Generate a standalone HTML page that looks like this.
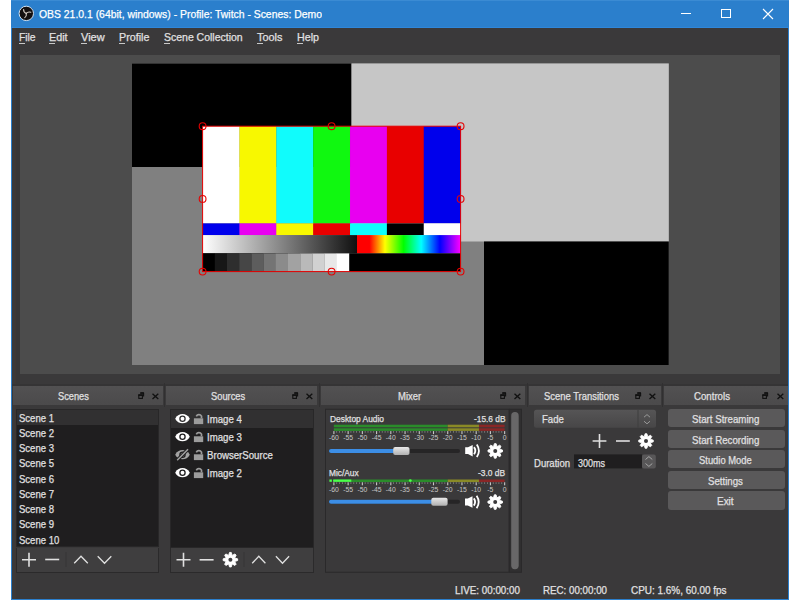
<!DOCTYPE html>
<html><head><meta charset="utf-8"><style>
*{box-sizing:border-box;margin:0;padding:0}
html,body{width:800px;height:600px;overflow:hidden;background:#fff;font-family:"Liberation Sans",sans-serif;color:#e1e0e1;position:relative}
div,svg{position:absolute}
.t{white-space:pre;line-height:1;transform-origin:0 0;-webkit-text-stroke:0.25px currentColor}
</style></head><body>
<div style="left:11px;top:0;width:778px;height:600px;background:#3a393a;border:1px solid #2b7fcc;border-top:none"></div>
<div style="left:11px;top:0;width:778px;height:28px;background:#2b7fcc;border-top:1px solid #3b8bd3;border-bottom:1px solid #2f87da"></div>
<div style="left:15px;top:28px;width:1px;height:571px;background:#3e3734"></div>
<div style="left:16px;top:28px;width:3.5px;height:571px;background:#373637"></div>
<svg style="left:18px;top:5px" width="17" height="17" viewBox="0 0 17 17"><circle cx="8.3" cy="8.4" r="7.2" fill="#141010" stroke="#cfe0f0" stroke-width="1"/><g fill="none" stroke="#d8d0c8" stroke-width="1.1" stroke-linecap="round"><path d="M8.3 8.4Q5.5 7.6 5.6 4.6"/><path d="M8.3 8.4Q10.2 6.3 12.8 7.3"/><path d="M8.3 8.4Q8.8 11.3 6.8 12.6"/></g></svg>
<div class="t" style="left:38.60px;top:9.37px;font-size:11.5px;color:#ffffff;transform:scaleX(0.904)">OBS 21.0.1 (64bit, windows) - Profile: Twitch - Scenes: Demo</div>
<div style="left:681px;top:13px;width:10px;height:1px;background:#fff"></div>
<div style="left:721px;top:9px;width:10px;height:9px;border:1px solid #fff"></div>
<svg style="left:762px;top:8px" width="12" height="12" viewBox="0 0 12 12"><path d="M1 1L11 11M11 1L1 11" stroke="#fff" stroke-width="1.1"/></svg>
<div class="t" style="left:19.00px;top:32.17px;font-size:11.5px;color:#e1e0e1;transform:scaleX(0.896)">File</div>
<div style="left:19.0px;top:43px;width:6px;height:1px;background:#c8c8c8"></div>
<div class="t" style="left:49.40px;top:32.17px;font-size:11.5px;color:#e1e0e1;transform:scaleX(0.938)">Edit</div>
<div style="left:49.4px;top:43px;width:6px;height:1px;background:#c8c8c8"></div>
<div class="t" style="left:81.40px;top:32.17px;font-size:11.5px;color:#e1e0e1;transform:scaleX(0.955)">View</div>
<div style="left:81.4px;top:43px;width:6px;height:1px;background:#c8c8c8"></div>
<div class="t" style="left:119.00px;top:32.17px;font-size:11.5px;color:#e1e0e1;transform:scaleX(0.932)">Profile</div>
<div style="left:119.0px;top:43px;width:6px;height:1px;background:#c8c8c8"></div>
<div class="t" style="left:163.80px;top:32.17px;font-size:11.5px;color:#e1e0e1;transform:scaleX(0.911)">Scene Collection</div>
<div style="left:163.8px;top:43px;width:6px;height:1px;background:#c8c8c8"></div>
<div class="t" style="left:256.70px;top:32.17px;font-size:11.5px;color:#e1e0e1;transform:scaleX(0.949)">Tools</div>
<div style="left:256.7px;top:43px;width:6px;height:1px;background:#c8c8c8"></div>
<div class="t" style="left:297.00px;top:32.17px;font-size:11.5px;color:#e1e0e1;transform:scaleX(0.930)">Help</div>
<div style="left:297.0px;top:43px;width:6px;height:1px;background:#c8c8c8"></div>
<div style="left:20px;top:55px;width:760px;height:319.4px;background:#4c4c4c"></div>
<svg style="left:0;top:0" width="800" height="600" viewBox="0 0 800 600"><rect x="132" y="63.5" width="536.75" height="301.5" fill="#808080"/><rect x="132" y="63.5" width="219.5" height="103.5" fill="#000"/><rect x="351.5" y="63.5" width="317.25" height="178" fill="#c6c6c6"/><rect x="484" y="241.5" width="184.75" height="123.5" fill="#000"/>
<defs><linearGradient id="gw" x1="0" x2="1"><stop offset="0" stop-color="#fff"/><stop offset="1" stop-color="#101010"/></linearGradient>
<linearGradient id="rb" x1="0" x2="1"><stop offset="0" stop-color="#f00"/><stop offset="0.12" stop-color="#f00"/><stop offset="0.27" stop-color="#ff0"/><stop offset="0.45" stop-color="#0f0"/><stop offset="0.62" stop-color="#0ff"/><stop offset="0.8" stop-color="#00f"/><stop offset="1" stop-color="#f0f"/></linearGradient></defs>
<rect x="202.60" y="126.2" width="37.16" height="97.20" fill="#ffffff"/>
<rect x="239.46" y="126.2" width="37.16" height="97.20" fill="#f8f800"/>
<rect x="276.31" y="126.2" width="37.16" height="97.20" fill="#10fcfc"/>
<rect x="313.17" y="126.2" width="37.16" height="97.20" fill="#10f810"/>
<rect x="350.03" y="126.2" width="37.16" height="97.20" fill="#e800f0"/>
<rect x="386.89" y="126.2" width="37.16" height="97.20" fill="#e80000"/>
<rect x="423.74" y="126.2" width="37.16" height="97.20" fill="#0000ec"/>
<rect x="202.60" y="223.4" width="37.16" height="11.70" fill="#0000ec"/>
<rect x="239.46" y="223.4" width="37.16" height="11.70" fill="#e800f0"/>
<rect x="276.31" y="223.4" width="37.16" height="11.70" fill="#f8f800"/>
<rect x="313.17" y="223.4" width="37.16" height="11.70" fill="#e80000"/>
<rect x="350.03" y="223.4" width="37.16" height="11.70" fill="#10fcfc"/>
<rect x="386.89" y="223.4" width="37.16" height="11.70" fill="#000000"/>
<rect x="423.74" y="223.4" width="37.16" height="11.70" fill="#ffffff"/>
<rect x="202.6" y="235.1" width="154.40" height="18.30" fill="url(#gw)"/>
<rect x="357" y="235.1" width="103.60" height="18.30" fill="url(#rb)"/>
<rect x="202.6" y="253.4" width="258.00" height="18.20" fill="#000"/>
<rect x="202.60" y="253.4" width="12.40" height="18.20" fill="rgb(0,0,0)"/>
<rect x="214.80" y="253.4" width="12.40" height="18.20" fill="rgb(23,23,23)"/>
<rect x="227.00" y="253.4" width="12.40" height="18.20" fill="rgb(46,46,46)"/>
<rect x="239.20" y="253.4" width="12.40" height="18.20" fill="rgb(70,70,70)"/>
<rect x="251.40" y="253.4" width="12.40" height="18.20" fill="rgb(93,93,93)"/>
<rect x="263.60" y="253.4" width="12.40" height="18.20" fill="rgb(116,116,116)"/>
<rect x="275.80" y="253.4" width="12.40" height="18.20" fill="rgb(139,139,139)"/>
<rect x="288.00" y="253.4" width="12.40" height="18.20" fill="rgb(162,162,162)"/>
<rect x="300.20" y="253.4" width="12.40" height="18.20" fill="rgb(185,185,185)"/>
<rect x="312.40" y="253.4" width="12.40" height="18.20" fill="rgb(209,209,209)"/>
<rect x="324.60" y="253.4" width="12.40" height="18.20" fill="rgb(232,232,232)"/>
<rect x="336.80" y="253.4" width="12.40" height="18.20" fill="rgb(255,255,255)"/>
<rect x="202.6" y="126.2" width="258.0" height="145.4" fill="none" stroke="#e60000" stroke-width="1"/>
<circle cx="202.60" cy="126.20" r="3.4" fill="none" stroke="#e60000" stroke-width="1.1"/>
<circle cx="202.60" cy="198.90" r="3.4" fill="none" stroke="#e60000" stroke-width="1.1"/>
<circle cx="202.60" cy="271.60" r="3.4" fill="none" stroke="#e60000" stroke-width="1.1"/>
<circle cx="331.60" cy="126.20" r="3.4" fill="none" stroke="#e60000" stroke-width="1.1"/>
<circle cx="331.60" cy="271.60" r="3.4" fill="none" stroke="#e60000" stroke-width="1.1"/>
<circle cx="460.60" cy="126.20" r="3.4" fill="none" stroke="#e60000" stroke-width="1.1"/>
<circle cx="460.60" cy="198.90" r="3.4" fill="none" stroke="#e60000" stroke-width="1.1"/>
<circle cx="460.60" cy="271.60" r="3.4" fill="none" stroke="#e60000" stroke-width="1.1"/>
</svg>
<div style="left:12px;top:384px;width:776px;height:2px;background:#353435"></div>
<div style="left:12.7px;top:385.7px;width:150.5px;height:19px;background:linear-gradient(#525152,#4b4a4b)"></div>
<div class="t" style="left:57.80px;top:391.41px;font-size:10.5px;color:#e1e0e1;transform:scaleX(0.882)">Scenes</div>
<svg style="left:137.5px;top:392px" width="7" height="7" viewBox="0 0 7 7"><path d="M2.3 1.2H5.6V4.4" fill="none" stroke="#111" stroke-width="1.1"/><path d="M2.3 0.9H5.9" stroke="#111" stroke-width="1.5"/><rect x="0.8" y="3.2" width="3.6" height="3.2" fill="none" stroke="#111" stroke-width="1.1"/><path d="M0.3 3H4.9" stroke="#111" stroke-width="1.6"/></svg>
<svg style="left:151.5px;top:392.5px" width="7" height="7" viewBox="0 0 7 7"><path d="M0.5 0.7L6.3 5.9M6.3 0.7L0.5 5.9" stroke="#111" stroke-width="1.35"/></svg>
<div style="left:166.4px;top:385.7px;width:150.20000000000002px;height:19px;background:linear-gradient(#525152,#4b4a4b)"></div>
<div class="t" style="left:210.80px;top:391.41px;font-size:10.5px;color:#e1e0e1;transform:scaleX(0.888)">Sources</div>
<svg style="left:292px;top:392px" width="7" height="7" viewBox="0 0 7 7"><path d="M2.3 1.2H5.6V4.4" fill="none" stroke="#111" stroke-width="1.1"/><path d="M2.3 0.9H5.9" stroke="#111" stroke-width="1.5"/><rect x="0.8" y="3.2" width="3.6" height="3.2" fill="none" stroke="#111" stroke-width="1.1"/><path d="M0.3 3H4.9" stroke="#111" stroke-width="1.6"/></svg>
<svg style="left:306px;top:392.5px" width="7" height="7" viewBox="0 0 7 7"><path d="M0.5 0.7L6.3 5.9M6.3 0.7L0.5 5.9" stroke="#111" stroke-width="1.35"/></svg>
<div style="left:320.8px;top:385.7px;width:204.49999999999994px;height:19px;background:linear-gradient(#525152,#4b4a4b)"></div>
<div class="t" style="left:397.80px;top:391.41px;font-size:10.5px;color:#e1e0e1;transform:scaleX(0.904)">Mixer</div>
<svg style="left:500px;top:392px" width="7" height="7" viewBox="0 0 7 7"><path d="M2.3 1.2H5.6V4.4" fill="none" stroke="#111" stroke-width="1.1"/><path d="M2.3 0.9H5.9" stroke="#111" stroke-width="1.5"/><rect x="0.8" y="3.2" width="3.6" height="3.2" fill="none" stroke="#111" stroke-width="1.1"/><path d="M0.3 3H4.9" stroke="#111" stroke-width="1.6"/></svg>
<svg style="left:514px;top:392.5px" width="7" height="7" viewBox="0 0 7 7"><path d="M0.5 0.7L6.3 5.9M6.3 0.7L0.5 5.9" stroke="#111" stroke-width="1.35"/></svg>
<div style="left:529.4px;top:385.7px;width:131.30000000000007px;height:19px;background:linear-gradient(#525152,#4b4a4b)"></div>
<div class="t" style="left:544.00px;top:391.41px;font-size:10.5px;color:#e1e0e1;transform:scaleX(0.897)">Scene Transitions</div>
<svg style="left:635px;top:392px" width="7" height="7" viewBox="0 0 7 7"><path d="M2.3 1.2H5.6V4.4" fill="none" stroke="#111" stroke-width="1.1"/><path d="M2.3 0.9H5.9" stroke="#111" stroke-width="1.5"/><rect x="0.8" y="3.2" width="3.6" height="3.2" fill="none" stroke="#111" stroke-width="1.1"/><path d="M0.3 3H4.9" stroke="#111" stroke-width="1.6"/></svg>
<svg style="left:649px;top:392.5px" width="7" height="7" viewBox="0 0 7 7"><path d="M0.5 0.7L6.3 5.9M6.3 0.7L0.5 5.9" stroke="#111" stroke-width="1.35"/></svg>
<div style="left:664px;top:385.7px;width:124px;height:19px;background:linear-gradient(#525152,#4b4a4b)"></div>
<div class="t" style="left:694.20px;top:391.41px;font-size:10.5px;color:#e1e0e1;transform:scaleX(0.920)">Controls</div>
<svg style="left:762px;top:392px" width="7" height="7" viewBox="0 0 7 7"><path d="M2.3 1.2H5.6V4.4" fill="none" stroke="#111" stroke-width="1.1"/><path d="M2.3 0.9H5.9" stroke="#111" stroke-width="1.5"/><rect x="0.8" y="3.2" width="3.6" height="3.2" fill="none" stroke="#111" stroke-width="1.1"/><path d="M0.3 3H4.9" stroke="#111" stroke-width="1.6"/></svg>
<svg style="left:776.5px;top:392.5px" width="7" height="7" viewBox="0 0 7 7"><path d="M0.5 0.7L6.3 5.9M6.3 0.7L0.5 5.9" stroke="#111" stroke-width="1.35"/></svg>
<div style="left:163.8px;top:383px;width:1px;height:24px;background:#313031"></div>
<div style="left:318.8px;top:383px;width:1px;height:24px;background:#313031"></div>
<div style="left:526.8px;top:383px;width:1px;height:24px;background:#313031"></div>
<div style="left:661.8px;top:383px;width:1px;height:24px;background:#313031"></div>
<div style="left:16px;top:409px;width:143px;height:138px;background:#1f1e1f;border:1px solid #282728"></div>
<div style="left:17px;top:410px;width:141px;height:15px;background:#313031"></div>
<div class="t" style="left:19.10px;top:412.79px;font-size:11px;color:#e1e0e1;transform:scaleX(0.866)">Scene 1</div>
<div class="t" style="left:19.10px;top:428.01px;font-size:11px;color:#e1e0e1;transform:scaleX(0.866)">Scene 2</div>
<div class="t" style="left:19.10px;top:443.23px;font-size:11px;color:#e1e0e1;transform:scaleX(0.866)">Scene 3</div>
<div class="t" style="left:19.10px;top:458.45px;font-size:11px;color:#e1e0e1;transform:scaleX(0.866)">Scene 5</div>
<div class="t" style="left:19.10px;top:473.67px;font-size:11px;color:#e1e0e1;transform:scaleX(0.866)">Scene 6</div>
<div class="t" style="left:19.10px;top:488.89px;font-size:11px;color:#e1e0e1;transform:scaleX(0.866)">Scene 7</div>
<div class="t" style="left:19.10px;top:504.11px;font-size:11px;color:#e1e0e1;transform:scaleX(0.866)">Scene 8</div>
<div class="t" style="left:19.10px;top:519.33px;font-size:11px;color:#e1e0e1;transform:scaleX(0.866)">Scene 9</div>
<div class="t" style="left:19.10px;top:534.55px;font-size:11px;color:#e1e0e1;transform:scaleX(0.866)">Scene 10</div>
<div style="left:16px;top:547.5px;width:143px;height:25px;background:#3f3e3f;border:1px solid #2b2a2b;border-top:none"></div>
<div style="left:170px;top:409px;width:144px;height:138.5px;background:#1f1e1f;border:1px solid #282728"></div>
<div style="left:171px;top:410px;width:142px;height:17.5px;background:#313031"></div>
<div style="left:170px;top:547.5px;width:144px;height:25px;background:#3f3e3f;border:1px solid #2b2a2b;border-top:none"></div>
<div class="t" style="left:207.40px;top:414.29px;font-size:11px;color:#e1e0e1;transform:scaleX(0.875)">Image 4</div>
<div class="t" style="left:207.40px;top:432.29px;font-size:11px;color:#e1e0e1;transform:scaleX(0.875)">Image 3</div>
<div class="t" style="left:207.40px;top:450.29px;font-size:11px;color:#e1e0e1;transform:scaleX(0.875)">BrowserSource</div>
<div class="t" style="left:207.40px;top:468.29px;font-size:11px;color:#e1e0e1;transform:scaleX(0.875)">Image 2</div>
<div style="left:667.5px;top:408.90px;width:117.5px;height:18.4px;background:#5a595a;border-radius:3px"></div>
<div class="t" style="left:691.60px;top:413.91px;font-size:10.5px;color:#e1e0e1;transform:scaleX(0.924)">Start Streaming</div>
<div style="left:667.5px;top:429.50px;width:117.5px;height:18.4px;background:#5a595a;border-radius:3px"></div>
<div class="t" style="left:691.60px;top:434.51px;font-size:10.5px;color:#e1e0e1;transform:scaleX(0.924)">Start Recording</div>
<div style="left:667.5px;top:450.10px;width:117.5px;height:18.4px;background:#5a595a;border-radius:3px"></div>
<div class="t" style="left:698.60px;top:455.11px;font-size:10.5px;color:#e1e0e1;transform:scaleX(0.895)">Studio Mode</div>
<div style="left:667.5px;top:470.70px;width:117.5px;height:18.4px;background:#5a595a;border-radius:3px"></div>
<div class="t" style="left:707.80px;top:475.71px;font-size:10.5px;color:#e1e0e1;transform:scaleX(0.920)">Settings</div>
<div style="left:667.5px;top:491.30px;width:117.5px;height:18.4px;background:#5a595a;border-radius:3px"></div>
<div class="t" style="left:717.20px;top:496.31px;font-size:10.5px;color:#e1e0e1;transform:scaleX(0.948)">Exit</div>
<div class="t" style="left:455.00px;top:584.71px;font-size:10.5px;color:#e1e0e1;transform:scaleX(0.935)">LIVE: 00:00:00</div>
<div class="t" style="left:543.00px;top:584.71px;font-size:10.5px;color:#e1e0e1;transform:scaleX(0.929)">REC: 00:00:00</div>
<div class="t" style="left:630.50px;top:584.71px;font-size:10.5px;color:#e1e0e1;transform:scaleX(0.946)">CPU: 1.6%, 60.00 fps</div>
<svg style="left:0;top:0" width="800" height="600" viewBox="0 0 800 600"><path d="M22 559.7H36M29 552.7V566.7" stroke="#e0e0e0" stroke-width="1.6"/><path d="M45.2 559.5H59.2" stroke="#e0e0e0" stroke-width="1.6"/><path d="M66 552V567" stroke="#363536" stroke-width="1"/><path d="M74.2 563.2L81 556.2L87.8 563.2" fill="none" stroke="#e0e0e0" stroke-width="1.3"/><path d="M97.7 556.2L104.5 563.2L111.3 556.2" fill="none" stroke="#e0e0e0" stroke-width="1.3"/><path d="M176.5 559.8H190.5M183.5 552.8V566.8" stroke="#e0e0e0" stroke-width="1.6"/><path d="M199.6 559.8H213.6" stroke="#e0e0e0" stroke-width="1.6"/><path d="M228.64 555.45 L229.53 552.45 L231.27 552.45 L232.16 555.45 L234.91 553.96 L236.14 555.19 L234.65 557.94 L237.65 558.83 L237.65 560.57 L234.65 561.46 L236.14 564.21 L234.91 565.44 L232.16 563.95 L231.27 566.95 L229.53 566.95 L228.64 563.95 L225.89 565.44 L224.66 564.21 L226.15 561.46 L223.15 560.57 L223.15 558.83 L226.15 557.94 L224.66 555.19 L225.89 553.96Z" fill="#fff" stroke="#fff" stroke-width="0.9" stroke-linejoin="round"/><circle cx="230.4" cy="559.7" r="2.0" fill="#3f3e3f"/><path d="M244 552V567" stroke="#363536" stroke-width="1"/><path d="M252.20000000000002 563.3L258.8 556.3L265.40000000000003 563.3" fill="none" stroke="#e0e0e0" stroke-width="1.3"/><path d="M275.9 556.3L282.5 563.3L289.1 556.3" fill="none" stroke="#e0e0e0" stroke-width="1.3"/><path d="M175.2 418.7C178.0 412.5 187.0 412.5 189.8 418.7C187.0 424.9 178.0 424.9 175.2 418.7Z" fill="#fff"/><circle cx="182.5" cy="418.7" r="2.6" fill="none" stroke="#313031" stroke-width="1.3"/><rect x="193.9" y="418.3" width="9.3" height="5.8" fill="#9c9c9c"/><path d="M196.3 416.3A3 3 0 0 1 201.5 416.1V418.3" fill="none" stroke="#9c9c9c" stroke-width="1.7"/><path d="M175.2 436.7C178.0 430.5 187.0 430.5 189.8 436.7C187.0 442.9 178.0 442.9 175.2 436.7Z" fill="#fff"/><circle cx="182.5" cy="436.7" r="2.6" fill="none" stroke="#1f1e1f" stroke-width="1.3"/><rect x="193.9" y="436.3" width="9.3" height="5.8" fill="#9c9c9c"/><path d="M196.3 434.3A3 3 0 0 1 201.5 434.1V436.3" fill="none" stroke="#9c9c9c" stroke-width="1.7"/><path d="M175.2 454.7C178.0 448.5 187.0 448.5 189.8 454.7C187.0 460.9 178.0 460.9 175.2 454.7Z" fill="#a2a2a2"/><circle cx="182.5" cy="454.7" r="2.6" fill="none" stroke="#1f1e1f" stroke-width="1.3"/><path d="M177.2 460.2L188.0 449.2" stroke="#1f1e1f" stroke-width="3.4"/><path d="M177.2 460.2L188.0 449.2" stroke="#a2a2a2" stroke-width="1.5"/><rect x="193.9" y="454.3" width="9.3" height="5.8" fill="#9c9c9c"/><path d="M196.3 452.3A3 3 0 0 1 201.5 452.1V454.3" fill="none" stroke="#9c9c9c" stroke-width="1.7"/><path d="M175.2 472.7C178.0 466.5 187.0 466.5 189.8 472.7C187.0 478.9 178.0 478.9 175.2 472.7Z" fill="#fff"/><circle cx="182.5" cy="472.7" r="2.6" fill="none" stroke="#1f1e1f" stroke-width="1.3"/><rect x="193.9" y="472.3" width="9.3" height="5.8" fill="#9c9c9c"/><path d="M196.3 470.3A3 3 0 0 1 201.5 470.1V472.3" fill="none" stroke="#9c9c9c" stroke-width="1.7"/><rect x="325.5" y="409.25" width="183.5" height="163" fill="#3a393a" stroke="#2a292a" stroke-width="1"/><rect x="509.5" y="409.25" width="12" height="163" fill="#302f30" stroke="#2a292a" stroke-width="1"/><rect x="511.2" y="412" width="7.5" height="157.3" rx="3.7" fill="#686768"/><rect x="333.85" y="424.7" width="113.83" height="2.6" fill="#2a8c2a"/><rect x="447.68" y="424.7" width="31.30" height="2.6" fill="#8a8a26"/><rect x="478.99" y="424.7" width="25.61" height="2.6" fill="#8a2626"/><rect x="333.85" y="428.3" width="113.83" height="2.6" fill="#2a8c2a"/><rect x="447.68" y="428.3" width="31.30" height="2.6" fill="#8a8a26"/><rect x="478.99" y="428.3" width="25.61" height="2.6" fill="#8a2626"/><rect x="333.35" y="431.10" width="1.1" height="3" fill="#c8c8c8"/><rect x="336.30" y="431.10" width="0.8" height="1.6" fill="#8a8a8a"/><rect x="339.14" y="431.10" width="0.8" height="1.6" fill="#8a8a8a"/><rect x="341.99" y="431.10" width="0.8" height="1.6" fill="#8a8a8a"/><rect x="344.83" y="431.10" width="0.8" height="1.6" fill="#8a8a8a"/><rect x="347.58" y="431.10" width="1.1" height="3" fill="#c8c8c8"/><rect x="350.53" y="431.10" width="0.8" height="1.6" fill="#8a8a8a"/><rect x="353.37" y="431.10" width="0.8" height="1.6" fill="#8a8a8a"/><rect x="356.22" y="431.10" width="0.8" height="1.6" fill="#8a8a8a"/><rect x="359.06" y="431.10" width="0.8" height="1.6" fill="#8a8a8a"/><rect x="361.81" y="431.10" width="1.1" height="3" fill="#c8c8c8"/><rect x="364.75" y="431.10" width="0.8" height="1.6" fill="#8a8a8a"/><rect x="367.60" y="431.10" width="0.8" height="1.6" fill="#8a8a8a"/><rect x="370.45" y="431.10" width="0.8" height="1.6" fill="#8a8a8a"/><rect x="373.29" y="431.10" width="0.8" height="1.6" fill="#8a8a8a"/><rect x="376.04" y="431.10" width="1.1" height="3" fill="#c8c8c8"/><rect x="378.98" y="431.10" width="0.8" height="1.6" fill="#8a8a8a"/><rect x="381.83" y="431.10" width="0.8" height="1.6" fill="#8a8a8a"/><rect x="384.68" y="431.10" width="0.8" height="1.6" fill="#8a8a8a"/><rect x="387.52" y="431.10" width="0.8" height="1.6" fill="#8a8a8a"/><rect x="390.27" y="431.10" width="1.1" height="3" fill="#c8c8c8"/><rect x="393.21" y="431.10" width="0.8" height="1.6" fill="#8a8a8a"/><rect x="396.06" y="431.10" width="0.8" height="1.6" fill="#8a8a8a"/><rect x="398.90" y="431.10" width="0.8" height="1.6" fill="#8a8a8a"/><rect x="401.75" y="431.10" width="0.8" height="1.6" fill="#8a8a8a"/><rect x="404.50" y="431.10" width="1.1" height="3" fill="#c8c8c8"/><rect x="407.44" y="431.10" width="0.8" height="1.6" fill="#8a8a8a"/><rect x="410.29" y="431.10" width="0.8" height="1.6" fill="#8a8a8a"/><rect x="413.13" y="431.10" width="0.8" height="1.6" fill="#8a8a8a"/><rect x="415.98" y="431.10" width="0.8" height="1.6" fill="#8a8a8a"/><rect x="418.73" y="431.10" width="1.1" height="3" fill="#c8c8c8"/><rect x="421.67" y="431.10" width="0.8" height="1.6" fill="#8a8a8a"/><rect x="424.52" y="431.10" width="0.8" height="1.6" fill="#8a8a8a"/><rect x="427.36" y="431.10" width="0.8" height="1.6" fill="#8a8a8a"/><rect x="430.21" y="431.10" width="0.8" height="1.6" fill="#8a8a8a"/><rect x="432.95" y="431.10" width="1.1" height="3" fill="#c8c8c8"/><rect x="435.90" y="431.10" width="0.8" height="1.6" fill="#8a8a8a"/><rect x="438.75" y="431.10" width="0.8" height="1.6" fill="#8a8a8a"/><rect x="441.59" y="431.10" width="0.8" height="1.6" fill="#8a8a8a"/><rect x="444.44" y="431.10" width="0.8" height="1.6" fill="#8a8a8a"/><rect x="447.18" y="431.10" width="1.1" height="3" fill="#c8c8c8"/><rect x="450.13" y="431.10" width="0.8" height="1.6" fill="#8a8a8a"/><rect x="452.98" y="431.10" width="0.8" height="1.6" fill="#8a8a8a"/><rect x="455.82" y="431.10" width="0.8" height="1.6" fill="#8a8a8a"/><rect x="458.67" y="431.10" width="0.8" height="1.6" fill="#8a8a8a"/><rect x="461.41" y="431.10" width="1.1" height="3" fill="#c8c8c8"/><rect x="464.36" y="431.10" width="0.8" height="1.6" fill="#8a8a8a"/><rect x="467.20" y="431.10" width="0.8" height="1.6" fill="#8a8a8a"/><rect x="470.05" y="431.10" width="0.8" height="1.6" fill="#8a8a8a"/><rect x="472.90" y="431.10" width="0.8" height="1.6" fill="#8a8a8a"/><rect x="475.64" y="431.10" width="1.1" height="3" fill="#c8c8c8"/><rect x="478.59" y="431.10" width="0.8" height="1.6" fill="#8a8a8a"/><rect x="481.43" y="431.10" width="0.8" height="1.6" fill="#8a8a8a"/><rect x="484.28" y="431.10" width="0.8" height="1.6" fill="#8a8a8a"/><rect x="487.12" y="431.10" width="0.8" height="1.6" fill="#8a8a8a"/><rect x="489.87" y="431.10" width="1.1" height="3" fill="#c8c8c8"/><rect x="492.82" y="431.10" width="0.8" height="1.6" fill="#8a8a8a"/><rect x="495.66" y="431.10" width="0.8" height="1.6" fill="#8a8a8a"/><rect x="498.51" y="431.10" width="0.8" height="1.6" fill="#8a8a8a"/><rect x="501.35" y="431.10" width="0.8" height="1.6" fill="#8a8a8a"/><rect x="504.10" y="431.10" width="1.1" height="3" fill="#c8c8c8"/><text x="333.85" y="440.40" font-size="6.8" fill="#c8c8c8" text-anchor="middle" font-family="Liberation Sans">-60</text><text x="348.08" y="440.40" font-size="6.8" fill="#c8c8c8" text-anchor="middle" font-family="Liberation Sans">-55</text><text x="362.31" y="440.40" font-size="6.8" fill="#c8c8c8" text-anchor="middle" font-family="Liberation Sans">-50</text><text x="376.54" y="440.40" font-size="6.8" fill="#c8c8c8" text-anchor="middle" font-family="Liberation Sans">-45</text><text x="390.77" y="440.40" font-size="6.8" fill="#c8c8c8" text-anchor="middle" font-family="Liberation Sans">-40</text><text x="405.00" y="440.40" font-size="6.8" fill="#c8c8c8" text-anchor="middle" font-family="Liberation Sans">-35</text><text x="419.23" y="440.40" font-size="6.8" fill="#c8c8c8" text-anchor="middle" font-family="Liberation Sans">-30</text><text x="433.45" y="440.40" font-size="6.8" fill="#c8c8c8" text-anchor="middle" font-family="Liberation Sans">-25</text><text x="447.68" y="440.40" font-size="6.8" fill="#c8c8c8" text-anchor="middle" font-family="Liberation Sans">-20</text><text x="461.91" y="440.40" font-size="6.8" fill="#c8c8c8" text-anchor="middle" font-family="Liberation Sans">-15</text><text x="476.14" y="440.40" font-size="6.8" fill="#c8c8c8" text-anchor="middle" font-family="Liberation Sans">-10</text><text x="490.37" y="440.40" font-size="6.8" fill="#c8c8c8" text-anchor="middle" font-family="Liberation Sans">-5</text><text x="504.60" y="440.40" font-size="6.8" fill="#c8c8c8" text-anchor="middle" font-family="Liberation Sans">0</text><rect x="333.85" y="479.5" width="113.83" height="2.6" fill="#2a8c2a"/><rect x="447.68" y="479.5" width="31.30" height="2.6" fill="#8a8a26"/><rect x="478.99" y="479.5" width="25.61" height="2.6" fill="#8a2626"/><rect x="333.35" y="482.30" width="1.1" height="3" fill="#c8c8c8"/><rect x="336.30" y="482.30" width="0.8" height="1.6" fill="#8a8a8a"/><rect x="339.14" y="482.30" width="0.8" height="1.6" fill="#8a8a8a"/><rect x="341.99" y="482.30" width="0.8" height="1.6" fill="#8a8a8a"/><rect x="344.83" y="482.30" width="0.8" height="1.6" fill="#8a8a8a"/><rect x="347.58" y="482.30" width="1.1" height="3" fill="#c8c8c8"/><rect x="350.53" y="482.30" width="0.8" height="1.6" fill="#8a8a8a"/><rect x="353.37" y="482.30" width="0.8" height="1.6" fill="#8a8a8a"/><rect x="356.22" y="482.30" width="0.8" height="1.6" fill="#8a8a8a"/><rect x="359.06" y="482.30" width="0.8" height="1.6" fill="#8a8a8a"/><rect x="361.81" y="482.30" width="1.1" height="3" fill="#c8c8c8"/><rect x="364.75" y="482.30" width="0.8" height="1.6" fill="#8a8a8a"/><rect x="367.60" y="482.30" width="0.8" height="1.6" fill="#8a8a8a"/><rect x="370.45" y="482.30" width="0.8" height="1.6" fill="#8a8a8a"/><rect x="373.29" y="482.30" width="0.8" height="1.6" fill="#8a8a8a"/><rect x="376.04" y="482.30" width="1.1" height="3" fill="#c8c8c8"/><rect x="378.98" y="482.30" width="0.8" height="1.6" fill="#8a8a8a"/><rect x="381.83" y="482.30" width="0.8" height="1.6" fill="#8a8a8a"/><rect x="384.68" y="482.30" width="0.8" height="1.6" fill="#8a8a8a"/><rect x="387.52" y="482.30" width="0.8" height="1.6" fill="#8a8a8a"/><rect x="390.27" y="482.30" width="1.1" height="3" fill="#c8c8c8"/><rect x="393.21" y="482.30" width="0.8" height="1.6" fill="#8a8a8a"/><rect x="396.06" y="482.30" width="0.8" height="1.6" fill="#8a8a8a"/><rect x="398.90" y="482.30" width="0.8" height="1.6" fill="#8a8a8a"/><rect x="401.75" y="482.30" width="0.8" height="1.6" fill="#8a8a8a"/><rect x="404.50" y="482.30" width="1.1" height="3" fill="#c8c8c8"/><rect x="407.44" y="482.30" width="0.8" height="1.6" fill="#8a8a8a"/><rect x="410.29" y="482.30" width="0.8" height="1.6" fill="#8a8a8a"/><rect x="413.13" y="482.30" width="0.8" height="1.6" fill="#8a8a8a"/><rect x="415.98" y="482.30" width="0.8" height="1.6" fill="#8a8a8a"/><rect x="418.73" y="482.30" width="1.1" height="3" fill="#c8c8c8"/><rect x="421.67" y="482.30" width="0.8" height="1.6" fill="#8a8a8a"/><rect x="424.52" y="482.30" width="0.8" height="1.6" fill="#8a8a8a"/><rect x="427.36" y="482.30" width="0.8" height="1.6" fill="#8a8a8a"/><rect x="430.21" y="482.30" width="0.8" height="1.6" fill="#8a8a8a"/><rect x="432.95" y="482.30" width="1.1" height="3" fill="#c8c8c8"/><rect x="435.90" y="482.30" width="0.8" height="1.6" fill="#8a8a8a"/><rect x="438.75" y="482.30" width="0.8" height="1.6" fill="#8a8a8a"/><rect x="441.59" y="482.30" width="0.8" height="1.6" fill="#8a8a8a"/><rect x="444.44" y="482.30" width="0.8" height="1.6" fill="#8a8a8a"/><rect x="447.18" y="482.30" width="1.1" height="3" fill="#c8c8c8"/><rect x="450.13" y="482.30" width="0.8" height="1.6" fill="#8a8a8a"/><rect x="452.98" y="482.30" width="0.8" height="1.6" fill="#8a8a8a"/><rect x="455.82" y="482.30" width="0.8" height="1.6" fill="#8a8a8a"/><rect x="458.67" y="482.30" width="0.8" height="1.6" fill="#8a8a8a"/><rect x="461.41" y="482.30" width="1.1" height="3" fill="#c8c8c8"/><rect x="464.36" y="482.30" width="0.8" height="1.6" fill="#8a8a8a"/><rect x="467.20" y="482.30" width="0.8" height="1.6" fill="#8a8a8a"/><rect x="470.05" y="482.30" width="0.8" height="1.6" fill="#8a8a8a"/><rect x="472.90" y="482.30" width="0.8" height="1.6" fill="#8a8a8a"/><rect x="475.64" y="482.30" width="1.1" height="3" fill="#c8c8c8"/><rect x="478.59" y="482.30" width="0.8" height="1.6" fill="#8a8a8a"/><rect x="481.43" y="482.30" width="0.8" height="1.6" fill="#8a8a8a"/><rect x="484.28" y="482.30" width="0.8" height="1.6" fill="#8a8a8a"/><rect x="487.12" y="482.30" width="0.8" height="1.6" fill="#8a8a8a"/><rect x="489.87" y="482.30" width="1.1" height="3" fill="#c8c8c8"/><rect x="492.82" y="482.30" width="0.8" height="1.6" fill="#8a8a8a"/><rect x="495.66" y="482.30" width="0.8" height="1.6" fill="#8a8a8a"/><rect x="498.51" y="482.30" width="0.8" height="1.6" fill="#8a8a8a"/><rect x="501.35" y="482.30" width="0.8" height="1.6" fill="#8a8a8a"/><rect x="504.10" y="482.30" width="1.1" height="3" fill="#c8c8c8"/><text x="333.85" y="491.60" font-size="6.8" fill="#c8c8c8" text-anchor="middle" font-family="Liberation Sans">-60</text><text x="348.08" y="491.60" font-size="6.8" fill="#c8c8c8" text-anchor="middle" font-family="Liberation Sans">-55</text><text x="362.31" y="491.60" font-size="6.8" fill="#c8c8c8" text-anchor="middle" font-family="Liberation Sans">-50</text><text x="376.54" y="491.60" font-size="6.8" fill="#c8c8c8" text-anchor="middle" font-family="Liberation Sans">-45</text><text x="390.77" y="491.60" font-size="6.8" fill="#c8c8c8" text-anchor="middle" font-family="Liberation Sans">-40</text><text x="405.00" y="491.60" font-size="6.8" fill="#c8c8c8" text-anchor="middle" font-family="Liberation Sans">-35</text><text x="419.23" y="491.60" font-size="6.8" fill="#c8c8c8" text-anchor="middle" font-family="Liberation Sans">-30</text><text x="433.45" y="491.60" font-size="6.8" fill="#c8c8c8" text-anchor="middle" font-family="Liberation Sans">-25</text><text x="447.68" y="491.60" font-size="6.8" fill="#c8c8c8" text-anchor="middle" font-family="Liberation Sans">-20</text><text x="461.91" y="491.60" font-size="6.8" fill="#c8c8c8" text-anchor="middle" font-family="Liberation Sans">-15</text><text x="476.14" y="491.60" font-size="6.8" fill="#c8c8c8" text-anchor="middle" font-family="Liberation Sans">-10</text><text x="490.37" y="491.60" font-size="6.8" fill="#c8c8c8" text-anchor="middle" font-family="Liberation Sans">-5</text><text x="504.60" y="491.60" font-size="6.8" fill="#c8c8c8" text-anchor="middle" font-family="Liberation Sans">0</text><rect x="329.4" y="479.5" width="2.5" height="2.3" fill="#4cff4c"/><rect x="333.1" y="479.5" width="18.2" height="2.3" fill="#4cff4c"/><circle cx="410.3" cy="480.6" r="1.4" fill="#4cff4c"/><rect x="329" y="449" width="131" height="4" rx="2" fill="#262526"/><rect x="329" y="449" width="66.2" height="4" rx="2" fill="#3c8ee6"/><defs><linearGradient id="hg451" x1="0" y1="0" x2="0" y2="1"><stop offset="0" stop-color="#e8e8e8"/><stop offset="1" stop-color="#b0b0b0"/></linearGradient></defs><rect x="393.2" y="447" width="16.3" height="8" rx="2" fill="url(#hg451)"/><rect x="329" y="499.7" width="131" height="4" rx="2" fill="#262526"/><rect x="329" y="499.7" width="104.3" height="4" rx="2" fill="#3c8ee6"/><defs><linearGradient id="hg501" x1="0" y1="0" x2="0" y2="1"><stop offset="0" stop-color="#e8e8e8"/><stop offset="1" stop-color="#b0b0b0"/></linearGradient></defs><rect x="431.3" y="497.7" width="16.3" height="8" rx="2" fill="url(#hg501)"/><path d="M465.2 447.3H468.0L472.7 444.9V456.5L468.0 454.09999999999997H465.2Z" fill="#fff"/><path d="M474.0 447.09999999999997Q476.59999999999997 450.7 474.0 454.3" fill="none" stroke="#fff" stroke-width="1.8"/><path d="M476.8 444.4Q481.0 450.7 476.8 457.0" fill="none" stroke="#fff" stroke-width="1.8"/><path d="M493.49 446.65 L494.38 443.65 L496.12 443.65 L497.01 446.65 L499.76 445.16 L500.99 446.39 L499.50 449.14 L502.50 450.03 L502.50 451.77 L499.50 452.66 L500.99 455.41 L499.76 456.64 L497.01 455.15 L496.12 458.15 L494.38 458.15 L493.49 455.15 L490.74 456.64 L489.51 455.41 L491.00 452.66 L488.00 451.77 L488.00 450.03 L491.00 449.14 L489.51 446.39 L490.74 445.16Z" fill="#fff" stroke="#fff" stroke-width="0.9" stroke-linejoin="round"/><circle cx="495.25" cy="450.9" r="2.0" fill="#3a393a"/><path d="M465 498.6H467.8L472.5 496.2V507.8L467.8 505.4H465Z" fill="#fff"/><path d="M473.8 498.4Q476.4 502 473.8 505.6" fill="none" stroke="#fff" stroke-width="1.8"/><path d="M476.6 495.7Q480.8 502 476.6 508.3" fill="none" stroke="#fff" stroke-width="1.8"/><path d="M493.44 497.85 L494.33 494.85 L496.07 494.85 L496.96 497.85 L499.71 496.36 L500.94 497.59 L499.45 500.34 L502.45 501.23 L502.45 502.97 L499.45 503.86 L500.94 506.61 L499.71 507.84 L496.96 506.35 L496.07 509.35 L494.33 509.35 L493.44 506.35 L490.69 507.84 L489.46 506.61 L490.95 503.86 L487.95 502.97 L487.95 501.23 L490.95 500.34 L489.46 497.59 L490.69 496.36Z" fill="#fff" stroke="#fff" stroke-width="0.9" stroke-linejoin="round"/><circle cx="495.2" cy="502.1" r="2.0" fill="#3a393a"/><defs><linearGradient id="cg" x1="0" y1="0" x2="0" y2="1"><stop offset="0" stop-color="#565556"/><stop offset="1" stop-color="#474647"/></linearGradient></defs><rect x="534" y="409.7" width="122" height="18" rx="2.5" fill="url(#cg)"/><path d="M638 410V427.5" stroke="#3f3e3f" stroke-width="1"/><path d="M644 417.2L647 414.6L650 417.2M644 421.2L647 423.8L650 421.2" fill="none" stroke="#a0a0a0" stroke-width="0.9"/><path d="M592.6 441H606.4M599.5 434.1V447.9" stroke="#e0e0e0" stroke-width="1.6"/><path d="M616.0 441H629.8" stroke="#e0e0e0" stroke-width="1.6"/><path d="M644.24 436.75 L645.13 433.75 L646.87 433.75 L647.76 436.75 L650.51 435.26 L651.74 436.49 L650.25 439.24 L653.25 440.13 L653.25 441.87 L650.25 442.76 L651.74 445.51 L650.51 446.74 L647.76 445.25 L646.87 448.25 L645.13 448.25 L644.24 445.25 L641.49 446.74 L640.26 445.51 L641.75 442.76 L638.75 441.87 L638.75 440.13 L641.75 439.24 L640.26 436.49 L641.49 435.26Z" fill="#fff" stroke="#fff" stroke-width="0.9" stroke-linejoin="round"/><circle cx="646" cy="441" r="2.0" fill="#3a393a"/><rect x="574" y="454.4" width="68" height="14" fill="#1f1e1f"/><rect x="642" y="454.6" width="13.8" height="13.8" rx="2" fill="#585758"/><path d="M645.5 459.5L648.9 456.6L652.3 459.5M645.5 463.5L648.9 466.4L652.3 463.5" fill="none" stroke="#b0b0b0" stroke-width="0.9"/></svg>
<div class="t" style="left:329.50px;top:414.51px;font-size:9.2px;color:#e1e0e1;transform:scaleX(0.911)">Desktop Audio</div>
<div class="t" style="left:473.90px;top:414.51px;font-size:9.2px;color:#e1e0e1;transform:scaleX(0.907)">-15.6 dB</div>
<div class="t" style="left:329.30px;top:468.81px;font-size:9.2px;color:#e1e0e1;transform:scaleX(0.906)">Mic/Aux</div>
<div class="t" style="left:478.30px;top:468.81px;font-size:9.2px;color:#e1e0e1;transform:scaleX(0.911)">-3.0 dB</div>
<div class="t" style="left:542.20px;top:414.31px;font-size:10.5px;color:#e1e0e1;transform:scaleX(0.911)">Fade</div>
<div class="t" style="left:533.90px;top:457.81px;font-size:10.5px;color:#e1e0e1;transform:scaleX(0.907)">Duration</div>
<div class="t" style="left:577.90px;top:457.81px;font-size:10.5px;color:#e1e0e1;transform:scaleX(0.860)">300ms</div>
</body></html>
